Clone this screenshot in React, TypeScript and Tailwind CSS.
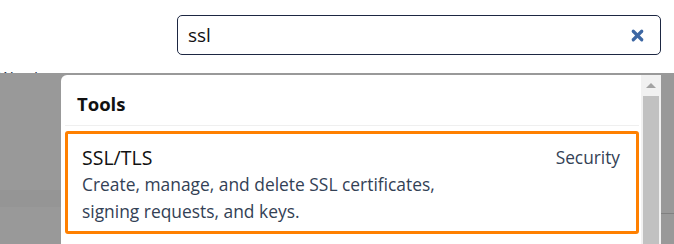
import { X } from "lucide-react";

const font = { fontFamily: '"Open Sans", "Noto Sans", sans-serif' };

export default function App() {
  return (
    <div className="relative h-[244px] w-[674px] overflow-hidden bg-white" style={font}>
      {/* header with search */}
      <div className="relative flex h-[73px] justify-end pr-[13px] pt-[15px]">
        <div className="absolute left-[-2px] top-[68px] text-[16px] leading-[20px] text-[#2c3a55]">Wrath</div>
        <div className="flex h-[40px] w-[484px] items-center rounded-[5px] border border-[#1d2742] pl-[10px] pr-[14px]">
          <span className="flex-1 text-[19px] text-[#111]">ssl</span>
          <X className="h-[17px] w-[17px] text-[#3d67a3]" strokeWidth={4.5} />
        </div>
      </div>

      {/* dimmed page */}
      <div className="relative flex h-[171px] bg-[#999999] pt-[2px]">
        <div className="absolute left-0 top-[117px] h-[17px] w-[61px] bg-[#959595]" />
        <div className="absolute right-0 top-[140px] h-px w-[13px] bg-[#808080]" />

        <div className="relative ml-[61px] flex w-[600px] rounded-tl-[6px] bg-white">
          <div className="flex-1 pl-[4px] pr-[2px]">
            <div className="border-b border-[#efefef] pb-[10px] pl-[12px] pt-[18px] text-[18.5px] font-bold leading-[22px] text-[#111]">
              Tools
            </div>
            <div className="mt-[5px] flex h-[103px] rounded-[3px] border-[3px] border-[#ff8000] pl-[14px] pr-[16px] pt-[11px]">
              <div className="flex-1">
                <div className="text-[19.5px] leading-[26px] text-[#111]">SSL/TLS</div>
                <div className="text-[17.4px] leading-[27px] text-[#334155]">
                  Create, manage, and delete SSL certificates,
                  <br />
                  signing requests, and keys.
                </div>
              </div>
              <div className="pt-[1px] text-[17.3px] leading-[24px] text-[#334155]">Security</div>
            </div>
          </div>
          <div className="flex w-[20px] flex-col bg-[#f1f1f1]">
            <div className="flex h-[21px] items-center justify-center">
              <div className="h-0 w-0 border-x-[5px] border-b-[5px] border-x-transparent border-b-[#a3a3a3]" />
            </div>
            <div className="mx-[2px] flex-1 bg-[#c1c1c1]" />
          </div>
        </div>
      </div>
    </div>
  );
}
